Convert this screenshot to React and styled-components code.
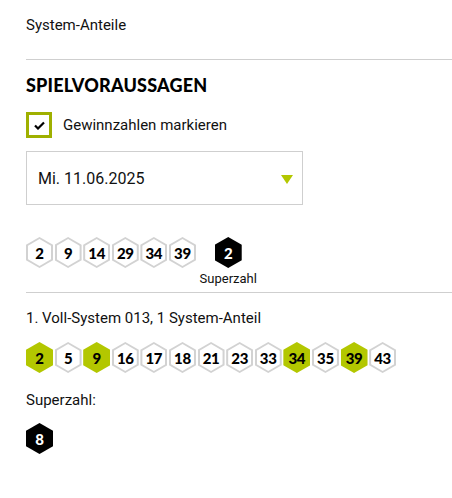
import React from 'react';
import styled, { createGlobalStyle } from 'styled-components';

const GlobalStyle = createGlobalStyle`
  body {
    margin: 0;
    background: #fff;
    font-family: Roboto, "Liberation Sans", sans-serif;
    color: #111;
  }
`;

const GREEN = '#b3c700';

const Page = styled.div`
  padding: 15px 0 0 26px;
`;

const Text = styled.div`
  font-size: 15px;
  line-height: 20px;
  margin-top: ${(p) => p.$mt || '0'};
`;

const Divider = styled.hr`
  border: 0;
  border-top: 1px solid #cfcfcf;
  margin: ${(p) => p.$m || '0'};
`;

const Heading = styled.h2`
  margin: 15px 0 0;
  font-family: Lato, "Open Sans", sans-serif;
  font-weight: 900;
  font-size: 18px;
  line-height: 20px;
  letter-spacing: 0.2px;
  color: #000;
`;

const CheckRow = styled.label`
  display: flex;
  align-items: center;
  gap: 11px;
  margin-top: 17px;
  font-size: 15px;
`;

const Box = styled.span`
  width: 26px;
  height: 26px;
  box-sizing: border-box;
  border: 3px solid #9fb000;
  display: flex;
  align-items: center;
  justify-content: center;
`;

const Select = styled.div`
  width: 277px;
  height: 54px;
  box-sizing: border-box;
  border: 1px solid #cfcfcf;
  margin-top: 13px;
  display: flex;
  align-items: center;
  justify-content: space-between;
  padding: 0 9px 0 11px;
  font-size: 16px;
`;

const Caret = styled.span`
  width: 0;
  height: 0;
  border-left: 6px solid transparent;
  border-right: 6px solid transparent;
  border-top: 9px solid ${GREEN};
  margin-top: 2px;
`;

const Row = styled.div`
  display: flex;
  align-items: flex-start;
  gap: 1.6px;
  margin-top: ${(p) => p.$mt || '0'};
`;

const HEX = 'polygon(50% 0, 100% 25%, 100% 75%, 50% 100%, 0 75%, 0 25%)';

const HexOuter = styled.div`
  width: 27px;
  height: 31px;
  clip-path: ${HEX};
  background: ${(p) => (p.$kind === 'plain' ? '#d2d2d2' : p.$kind === 'hit' ? GREEN : '#000')};
  display: flex;
  align-items: center;
  justify-content: center;
  flex-shrink: 0;
`;

const HexInner = styled.div`
  width: 23px;
  height: 27px;
  clip-path: ${HEX};
  background: ${(p) => (p.$kind === 'plain' ? '#fff' : p.$kind === 'hit' ? GREEN : '#000')};
  color: ${(p) => (p.$kind === 'super' ? '#fff' : '#000')};
  display: flex;
  align-items: center;
  justify-content: center;
  font-family: Lato, "Open Sans", sans-serif;
  font-weight: 900;
  font-size: 15px;
  letter-spacing: -0.3px;
`;

const SuperGroup = styled.div`
  display: flex;
  flex-direction: column;
  align-items: center;
  margin-left: 2px;
`;

const SmallLabel = styled.div`
  font-size: 13px;
  line-height: 16px;
  margin-top: 3px;
`;

const Hex = ({ n, kind = 'plain' }) => (
  <HexOuter $kind={kind}>
    <HexInner $kind={kind}>{n}</HexInner>
  </HexOuter>
);

const drawn = [2, 9, 14, 29, 34, 39];
const system = [2, 5, 9, 16, 17, 18, 21, 23, 33, 34, 35, 39, 43];

export default function App() {
  return (
    <>
      <GlobalStyle />
      <Page>
        <Text>System-Anteile</Text>
        <Divider $m="24px 0 0" />
        <Heading>SPIELVORAUSSAGEN</Heading>
        <CheckRow>
          <Box>
            <svg width="11" height="9" viewBox="0 0 11 9">
              <path d="M1 4.5 L4 7.5 L10 1.5" fill="none" stroke="#000" strokeWidth="2.2" />
            </svg>
          </Box>
          Gewinnzahlen markieren
        </CheckRow>
        <Select>
          Mi. 11.06.2025
          <Caret />
        </Select>
        <Row $mt="32px">
          {drawn.map((n) => (
            <Hex key={n} n={n} />
          ))}
          <SuperGroup>
            <Hex n={2} kind="super" />
            <SmallLabel>Superzahl</SmallLabel>
          </SuperGroup>
        </Row>
        <Divider $m="5px 0 0" />
        <Text $mt="15px">1. Voll-System 013, 1 System-Anteil</Text>
        <Row $mt="14px">
          {system.map((n) => (
            <Hex key={n} n={n} kind={drawn.includes(n) ? 'hit' : 'plain'} />
          ))}
        </Row>
        <Text $mt="17px">Superzahl:</Text>
        <Row $mt="13px">
          <Hex n={8} kind="super" />
        </Row>
      </Page>
    </>
  );
}
